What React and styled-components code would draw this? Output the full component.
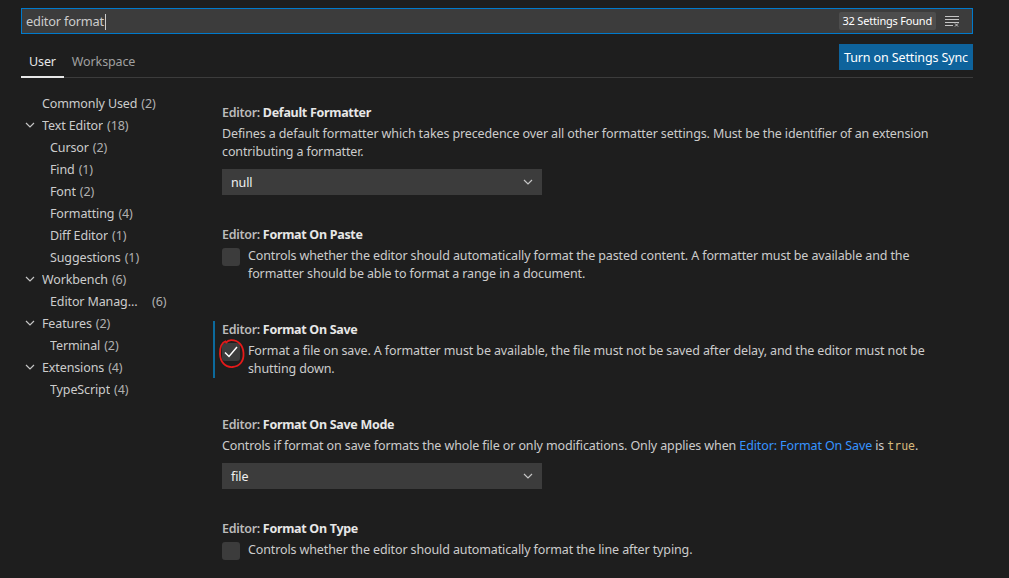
import React from "react";
import styled, { createGlobalStyle } from "styled-components";

const GlobalStyle = createGlobalStyle`
  html, body {
    margin: 0;
    padding: 0;
    background: #1e1e1e;
  }
  body {
    font-family: "Segoe UI", "Noto Sans", sans-serif;
    font-size: 12.5px;
    letter-spacing: -0.12px;
    color: #cccccc;
  }
`;

const Page = styled.div`
  width: 1009px;
  height: 578px;
  overflow: hidden;
  padding: 8px 36px 0 21px;
  box-sizing: border-box;
`;

const SearchBox = styled.div`
  height: 26px;
  box-sizing: border-box;
  border: 1px solid #007acc;
  background: #3c3c3c;
  display: flex;
  align-items: center;
  padding: 0 12px 0 4px;
  .query {
    flex: 1 1 auto;
    font-size: 12.8px;
    letter-spacing: -0.2px;
    color: #cccccc;
    span {
      display: inline-block;
      width: 1px;
      height: 16px;
      margin-left: 1px;
      background: #cccccc;
      vertical-align: -4px;
    }
  }
`;

const Badge = styled.span`
  background: #4d4d4d;
  color: #ffffff;
  font-size: 11px;
  letter-spacing: -0.2px;
  padding: 0 4px;
  height: 18px;
  line-height: 18px;
  border-radius: 2px;
  margin-right: 8px;
`;

const Header = styled.div`
  margin-top: 10px;
  height: 33px;
  display: flex;
  align-items: flex-start;
  justify-content: space-between;
  border-bottom: 1px solid #3c3c3c;
`;

const Tabs = styled.div`
  display: flex;
  align-self: flex-end;
`;

const Tab = styled.div`
  padding: 0 8px;
  height: 32px;
  line-height: 32px;
  box-sizing: border-box;
  color: ${p => (p.active ? "#e7e7e7" : "#a0a0a0")};
  border-bottom: 2px solid ${p => (p.active ? "#e7e7e7" : "transparent")};
  margin-bottom: -1px;
`;

const SyncButton = styled.button`
  height: 26px;
  border: 0;
  background: #0e639c;
  color: #ffffff;
  font: inherit;
  letter-spacing: inherit;
  padding: 0 5px;
`;

const Body = styled.div`
  display: flex;
`;

const Toc = styled.ul`
  list-style: none;
  margin: 0;
  padding: 14px 0 0;
  width: 201px;
  flex: 0 0 auto;
`;

const TocItem = styled.li`
  height: 22px;
  display: flex;
  align-items: center;
  padding-left: ${p => (p.depth ? 29 : 21)}px;
  position: relative;
  white-space: nowrap;
  color: #cccccc;
  svg {
    position: absolute;
    left: 4px;
    top: 6px;
  }
  .label {
    overflow: hidden;
    text-overflow: ellipsis;
    max-width: ${p => (p.truncate ? "94px" : "none")};
  }
  .count {
    color: #b0b0b0;
    margin-left: ${p => (p.truncate ? "8px" : "4px")};
  }
`;

const Settings = styled.div`
  flex: 1 1 auto;
  padding: 26px 24px 0 0;
`;

const Setting = styled.div`
  margin-left: -9px;
  padding-left: 7px;
  border-left: 2px solid ${p => (p.focused ? "#0c6a9c" : "transparent")};
  margin-bottom: ${p => (p.bool ? 38 : 31)}px;
`;

const Title = styled.div`
  line-height: 18px;
  font-weight: 700;
  letter-spacing: -0.3px;
  color: #e7e7e7;
  .category {
    font-weight: 600;
    color: #bbbbbb;
  }
`;

const Description = styled.div`
  margin-top: 3px;
  line-height: 18px;
  color: #cccccc;
  a {
    color: #3794ff;
    text-decoration: none;
  }
  code {
    font-family: "DejaVu Sans Mono", monospace;
    font-size: 11.5px;
    letter-spacing: 0;
    color: #d7ba7d;
  }
`;

const Select = styled.div`
  margin-top: 8px;
  width: 320px;
  height: 26px;
  background: #3c3c3c;
  color: #f0f0f0;
  display: flex;
  align-items: center;
  justify-content: space-between;
  padding: 0 9px;
  box-sizing: border-box;
`;

const BoolRow = styled.div`
  display: flex;
  align-items: flex-start;
  gap: 8px;
  margin-top: 3px;
  ${Description} {
    margin-top: 0;
  }
`;

const Checkbox = styled.div`
  flex: 0 0 auto;
  width: 18px;
  height: 18px;
  margin-top: 1px;
  border-radius: 3px;
  background: #3c3c3c;
  position: relative;
  display: flex;
  align-items: center;
  justify-content: center;
`;

const Annotation = styled.svg`
  position: absolute;
  left: -3px;
  top: -4px;
  overflow: visible;
`;

const Chevron = () => (
  <svg width="10" height="10" viewBox="0 0 10 10">
    <path d="M1 3 L5 7 L9 3" stroke="#c5c5c5" strokeWidth="1.2" fill="none" />
  </svg>
);

const ClearIcon = () => (
  <svg width="16" height="16" viewBox="0 0 16 16">
    <g stroke="#c5c5c5" strokeWidth="1">
      <path d="M1 3.5 H15 M1 6.5 H15 M1 9.5 H15 M1 12.5 H9" />
      <path d="M11 10.5 L14 13.5 M14 10.5 L11 13.5" />
    </g>
  </svg>
);

const toc = [
  { label: "Commonly Used", count: 2 },
  { label: "Text Editor", count: 18, open: true },
  { label: "Cursor", count: 2, depth: 1 },
  { label: "Find", count: 1, depth: 1 },
  { label: "Font", count: 2, depth: 1 },
  { label: "Formatting", count: 4, depth: 1 },
  { label: "Diff Editor", count: 1, depth: 1 },
  { label: "Suggestions", count: 1, depth: 1 },
  { label: "Workbench", count: 6, open: true },
  { label: "Editor Management", count: 6, depth: 1, truncate: true },
  { label: "Features", count: 2, open: true },
  { label: "Terminal", count: 2, depth: 1 },
  { label: "Extensions", count: 4, open: true },
  { label: "TypeScript", count: 4, depth: 1 }
];

const SettingTitle = ({ name }) => (
  <Title>
    <span className="category">Editor: </span>
    {name}
  </Title>
);

const BoolSetting = ({ name, checked, focused, children }) => (
  <Setting bool focused={focused}>
    <SettingTitle name={name} />
    <BoolRow>
      <Checkbox>
        {checked ? (
          <svg width="16" height="16" viewBox="0 0 16 16">
            <path d="M2 8.5 L6 12.5 L14 3" stroke="#ffffff" strokeWidth="1.5" fill="none" />
          </svg>
        ) : null}
        {checked ? (
          <Annotation width="26" height="30" viewBox="0 0 26 30">
            <path
              d="M7 2 C2.5 3.5 0.8 9 1 15 C1.3 23 6 28.5 13.5 28 C21 27.5 25 22 24.5 14 C24 6.5 19.5 1 12 1.2 C10 1.3 8 2.5 6.5 4"
              stroke="#e51a1a"
              strokeWidth="1.8"
              fill="none"
            />
          </Annotation>
        ) : null}
      </Checkbox>
      <Description>{children}</Description>
    </BoolRow>
  </Setting>
);

export default function App() {
  return (
    <Page>
      <GlobalStyle />
      <SearchBox>
        <div className="query">
          editor format<span />
        </div>
        <Badge>32 Settings Found</Badge>
        <ClearIcon />
      </SearchBox>
      <Header>
        <Tabs>
          <Tab active>User</Tab>
          <Tab>Workspace</Tab>
        </Tabs>
        <SyncButton>Turn on Settings Sync</SyncButton>
      </Header>
      <Body>
        <Toc>
          {toc.map(item => (
            <TocItem key={item.label} depth={item.depth} truncate={item.truncate}>
              {item.open ? <Chevron /> : null}
              <span className="label">{item.label}</span>
              <span className="count">({item.count})</span>
            </TocItem>
          ))}
        </Toc>
        <Settings>
          <Setting>
            <SettingTitle name="Default Formatter" />
            <Description>
              Defines a default formatter which takes precedence over all other formatter settings. Must be the
              identifier of an extension contributing a formatter.
            </Description>
            <Select>
              null
              <Chevron />
            </Select>
          </Setting>
          <BoolSetting name="Format On Paste">
            Controls whether the editor should automatically format the pasted content. A formatter must be available
            and the formatter should be able to format a range in a document.
          </BoolSetting>
          <BoolSetting name="Format On Save" checked focused>
            Format a file on save. A formatter must be available, the file must not be saved after delay, and the
            editor must not be shutting down.
          </BoolSetting>
          <Setting>
            <SettingTitle name="Format On Save Mode" />
            <Description>
              Controls if format on save formats the whole file or only modifications. Only applies when{" "}
              <a href="#">Editor: Format On Save</a> is <code>true</code>.
            </Description>
            <Select>
              file
              <Chevron />
            </Select>
          </Setting>
          <BoolSetting name="Format On Type">
            Controls whether the editor should automatically format the line after typing.
          </BoolSetting>
        </Settings>
      </Body>
    </Page>
  );
}
